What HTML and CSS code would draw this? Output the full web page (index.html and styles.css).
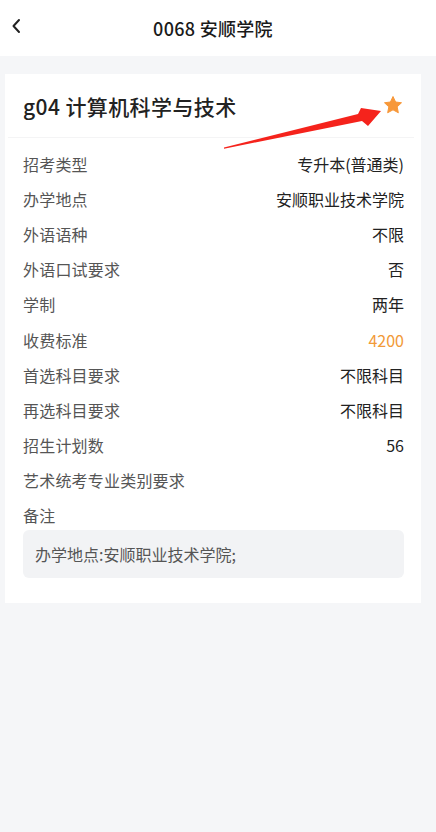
FILE: index.html
```html
<!DOCTYPE html>
<html lang="zh-CN">
<head>
  <meta charset="UTF-8" />
  <title>0068 安顺学院</title>
  <link rel="stylesheet" href="styles.css">
</head>
<body>

<div class="navbar">
  <svg class="back" width="10" height="16" viewBox="0 0 10 16">
    <path d="M8 2 L2.5 8 L8 14" fill="none" stroke="#222" stroke-width="2" stroke-linecap="round" stroke-linejoin="round"/>
  </svg>
  <div class="nav-title">0068 安顺学院</div>
</div>

<div class="card">
  <div class="card-head">
    <div class="major">g04 计算机科学与技术</div>
    <svg class="star" width="20" height="20" viewBox="0 0 24 24">
      <path d="M12 1.8l3.1 6.6 7.1.9-5.2 4.9 1.4 7.1L12 17.8l-6.4 3.5 1.4-7.1L1.8 9.3l7.1-.9z" fill="#f7983a" stroke="#f7983a" stroke-width="1.2" stroke-linejoin="round"/>
    </svg>
  </div>

  <div class="rows">
    <div class="row"><span class="label">招考类型</span><span class="value">专升本(普通类)</span></div>
    <div class="row"><span class="label">办学地点</span><span class="value">安顺职业技术学院</span></div>
    <div class="row"><span class="label">外语语种</span><span class="value">不限</span></div>
    <div class="row"><span class="label">外语口试要求</span><span class="value">否</span></div>
    <div class="row"><span class="label">学制</span><span class="value">两年</span></div>
    <div class="row"><span class="label">收费标准</span><span class="value fee">4200</span></div>
    <div class="row"><span class="label">首选科目要求</span><span class="value">不限科目</span></div>
    <div class="row"><span class="label">再选科目要求</span><span class="value">不限科目</span></div>
    <div class="row"><span class="label">招生计划数</span><span class="value">56</span></div>
    <div class="row"><span class="label">艺术统考专业类别要求</span><span class="value"></span></div>
    <div class="row"><span class="label">备注</span></div>
  </div>

  <div class="remark">办学地点:安顺职业技术学院;</div>
</div>

<!-- annotation arrow pointing at the star -->
<svg class="arrow" width="436" height="832" viewBox="0 0 436 832">
  <polygon points="224,147.5 358,114 361,108 381,111 368,126 362,121 224,148.8" fill="#f5231c"/>
</svg>

</body>
</html>
```

FILE: styles.css
```css
body {
  font-family: "Noto Sans CJK SC", "Noto Sans", sans-serif;
  background: #f5f6f8;
  margin: 0;
  color: #222;
}
.navbar {
  height: 56px;
  background: #fff;
  display: flex;
  align-items: center;
  justify-content: center;
  position: relative;
}
.back {
  position: absolute;
  left: 11px;
  top: 18px;
}
.nav-title {
  font-size: 18px;
  font-weight: 500;
  letter-spacing: 0.3px;
  color: #1a1a1a;
  margin: -1px 0 0 -10px;
}
.card {
  background: #fff;
  margin: 18px 15px 0 5px;
  padding: 0 17px 25px 18px;
}
.card-head {
  height: 63px;
  display: flex;
  align-items: center;
  justify-content: space-between;
  border-bottom: 1px solid #f4f4f5;
  margin: 0 -10px 0 -15px;
  padding: 0 10px 0 15px;
}
.major {
  font-size: 21px;
  font-weight: 500;
  letter-spacing: 0.4px;
  color: #222;
  margin-top: 1px;
}
.star {
  margin-right: 1px;
  margin-top: -2px;
}
.rows {
  padding-top: 8px;
}
.row {
  height: 35.2px;
  display: flex;
  align-items: center;
  justify-content: space-between;
  font-size: 16px;
}
.label {
  color: #555;
  letter-spacing: 0.2px;
}
.value {
  color: #222;
}
.fee {
  color: #f29a38;
}
.remark {
  margin-top: -3px;
  background: #f2f3f5;
  border-radius: 6px;
  height: 48px;
  line-height: 48px;
  padding: 0 12px;
  font-size: 16px;
  color: #555;
}
.arrow {
  position: absolute;
  left: 0;
  top: 0;
  pointer-events: none;
}
```
